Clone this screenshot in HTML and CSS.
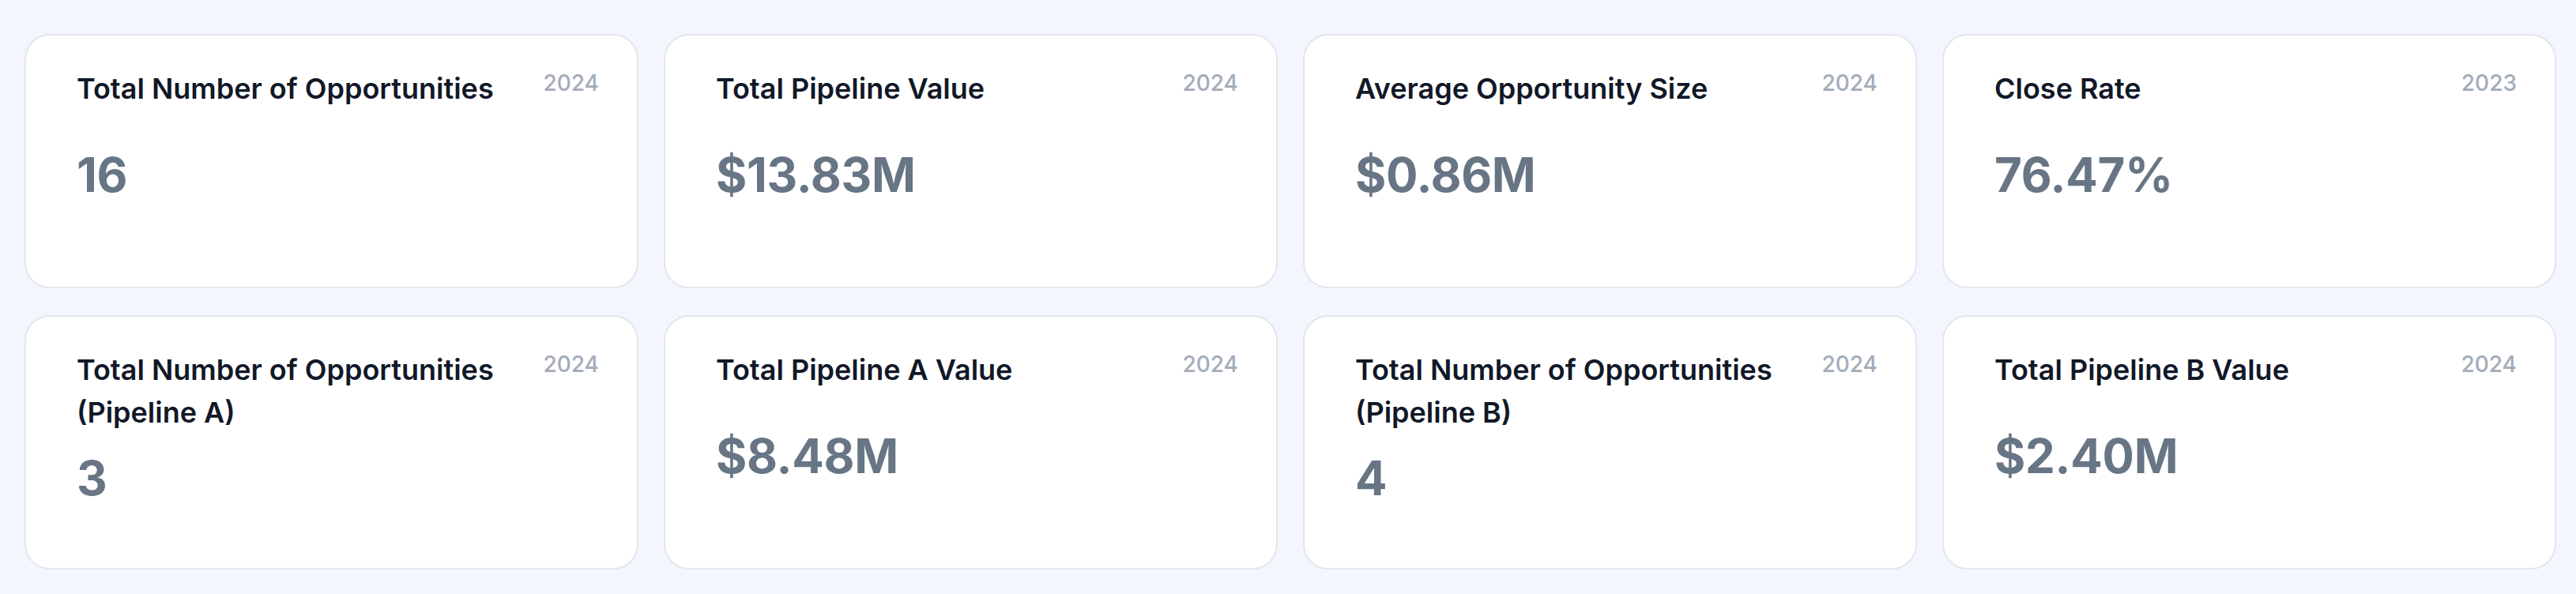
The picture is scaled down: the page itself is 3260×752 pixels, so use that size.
FILE: index.html
```html
<!DOCTYPE html>
<html lang="en">
<head>
<meta charset="utf-8">
<title>Pipeline KPIs</title>
<link rel="stylesheet" href="styles.css">
</head>
<body>
<main class="grid">
  <section class="card">
    <div class="card-head"><h3 class="card-title">Total Number of Opportunities</h3><span class="card-year">2024</span></div>
    <div class="card-value">16</div>
  </section>
  <section class="card">
    <div class="card-head"><h3 class="card-title">Total Pipeline Value</h3><span class="card-year">2024</span></div>
    <div class="card-value">$13.83M</div>
  </section>
  <section class="card">
    <div class="card-head"><h3 class="card-title">Average Opportunity Size</h3><span class="card-year">2024</span></div>
    <div class="card-value">$0.86M</div>
  </section>
  <section class="card">
    <div class="card-head"><h3 class="card-title">Close Rate</h3><span class="card-year">2023</span></div>
    <div class="card-value">76.47%</div>
  </section>
  <section class="card">
    <div class="card-head"><h3 class="card-title">Total Number of Opportunities (Pipeline A)</h3><span class="card-year">2024</span></div>
    <div class="card-value">3</div>
  </section>
  <section class="card">
    <div class="card-head"><h3 class="card-title">Total Pipeline A Value</h3><span class="card-year">2024</span></div>
    <div class="card-value">$8.48M</div>
  </section>
  <section class="card">
    <div class="card-head"><h3 class="card-title">Total Number of Opportunities (Pipeline B)</h3><span class="card-year">2024</span></div>
    <div class="card-value">4</div>
  </section>
  <section class="card">
    <div class="card-head"><h3 class="card-title">Total Pipeline B Value</h3><span class="card-year">2024</span></div>
    <div class="card-value">$2.40M</div>
  </section>
</main>
</body>
</html>
```

FILE: styles.css
```css
* { box-sizing: border-box; }

html, body {
  margin: 0;
  padding: 0;
}

body {
  background: #f4f6fd;
  font-family: Inter, "Noto Sans", "Liberation Sans", sans-serif;
  width: 3260px;
  height: 752px;
  overflow: hidden;
}

.grid {
  display: grid;
  grid-template-columns: repeat(4, 1fr);
  grid-auto-rows: 322px;
  column-gap: 32px;
  row-gap: 34px;
  padding: 43px 25px 0 31px;
}

.card {
  background: #ffffff;
  border: 2px solid #e3e6ec;
  border-radius: 32px;
  padding: 40px 48px 0 64px;
}

.card-head {
  display: flex;
  justify-content: space-between;
  align-items: flex-start;
  gap: 24px;
  min-height: 80px;
}

.card-title {
  margin: 0;
  font-size: 36px;
  line-height: 54px;
  font-weight: 600;
  color: #111827;
  max-width: 560px;
}

.card-year {
  font-size: 28px;
  line-height: 40px;
  font-weight: 500;
  color: #a3acb8;
  flex-shrink: 0;
}

.card-value {
  margin-top: 20px;
  font-size: 60px;
  line-height: 72px;
  font-weight: 700;
  letter-spacing: -0.3px;
  color: #677585;
}
```
